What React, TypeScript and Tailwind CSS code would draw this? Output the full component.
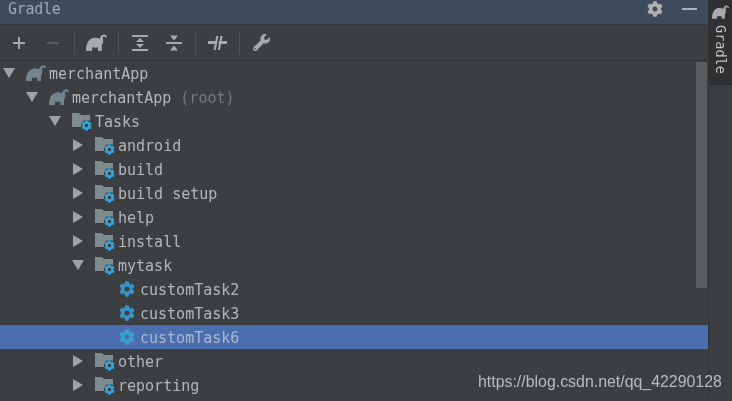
import React from "react";
import { FaCog, FaWrench } from "react-icons/fa";

interface TreeRow {
  label: string;
  depth: number;
  kind: "elephant" | "folder" | "task";
  arrow?: "open" | "closed";
  suffix?: string;
  selected?: boolean;
}

const rows: TreeRow[] = [
  { label: "merchantApp", depth: 0, kind: "elephant", arrow: "open" },
  { label: "merchantApp", depth: 1, kind: "elephant", arrow: "open", suffix: "(root)" },
  { label: "Tasks", depth: 2, kind: "folder", arrow: "open" },
  { label: "android", depth: 3, kind: "folder", arrow: "closed" },
  { label: "build", depth: 3, kind: "folder", arrow: "closed" },
  { label: "build setup", depth: 3, kind: "folder", arrow: "closed" },
  { label: "help", depth: 3, kind: "folder", arrow: "closed" },
  { label: "install", depth: 3, kind: "folder", arrow: "closed" },
  { label: "mytask", depth: 3, kind: "folder", arrow: "open" },
  { label: "customTask2", depth: 4, kind: "task" },
  { label: "customTask3", depth: 4, kind: "task" },
  { label: "customTask6", depth: 4, kind: "task", selected: true },
  { label: "other", depth: 3, kind: "folder", arrow: "closed" },
  { label: "reporting", depth: 3, kind: "folder", arrow: "closed" },
];

const indent = ["pl-[3px]", "pl-[26px]", "pl-[49px]", "pl-[72px]", "pl-[95px]"];

function Elephant({ className }: { className: string }) {
  return (
    <svg viewBox="0 0 20 16" className={className} fill="currentColor">
      <path d="M0 16 C0 9 2.5 4 8 3.4 C10 3.2 11.5 3.8 13.2 4.2 C13.6 2 15.2 0.3 17.2 0.3 C18.8 0.3 20 1.5 20 3 L18.4 3.4 C18.3 2.5 17.8 2.1 17.1 2.2 C16.2 2.4 15.9 3.4 16.2 5 C16.6 7.4 16 9.6 15 10.6 L15 16 L11.6 16 L11 12.6 C9 13.2 7.6 13 6.2 12.6 L5.6 16 Z" />
    </svg>
  );
}

function FolderGear() {
  return (
    <span className="relative block w-[20px] h-[18px]">
      <svg viewBox="0 0 18 14" className="absolute left-0 top-0 w-[18px] h-[14px] text-[#7f8b91]" fill="currentColor">
        <path d="M0 0 H7 L9 2 H18 V14 H0 Z" />
      </svg>
      <FaCog className="absolute right-0 bottom-0 w-[11px] h-[11px] text-[#35a3d4] bg-[#3c3f41] rounded-full" />
    </span>
  );
}

function Arrow({ dir }: { dir: "open" | "closed" }) {
  return (
    <svg viewBox="0 0 12 12" className="w-[12px] h-[12px] text-[#a0a3a5]" fill="currentColor">
      {dir === "open" ? <path d="M0 1 H12 L6 11 Z" /> : <path d="M1 0 L11 6 L1 12 Z" />}
    </svg>
  );
}

function ToolDivider() {
  return <div className="w-px h-[22px] bg-[#505355] mx-[11px]" />;
}

function Toolbar() {
  return (
    <div className="h-[36px] flex items-center pl-[12px] border-b border-[#303233] text-[#a7aaac]">
      <svg viewBox="0 0 14 14" className="w-[14px] h-[14px]" fill="currentColor">
        <path d="M6 1 H8 V6 H13 V8 H8 V13 H6 V8 H1 V6 H6 Z" />
      </svg>
      <svg viewBox="0 0 14 14" className="w-[14px] h-[14px] ml-[20px] mr-[3px] text-[#5a5d5f]" fill="currentColor">
        <path d="M1 6 H13 V8 H1 Z" />
      </svg>
      <ToolDivider />
      <Elephant className="w-[21px] h-[17px]" />
      <ToolDivider />
      <svg viewBox="0 0 16 16" className="w-[16px] h-[16px] ml-[2px]" fill="currentColor">
        <path d="M0 0 H16 V2 H0 Z M0 14 H16 V16 H0 Z M8 3 L12 7 H4 Z M4 9 H12 L8 13 Z" />
      </svg>
      <svg viewBox="0 0 16 16" className="w-[16px] h-[16px] ml-[18px] mr-[2px]" fill="currentColor">
        <path d="M0 7 H16 V9 H0 Z M4 0.5 H12 L8 5.5 Z M8 10.5 L12 15.5 H4 Z" />
      </svg>
      <ToolDivider />
      <svg viewBox="0 0 19 16" className="w-[19px] h-[16px] ml-[1px] mr-[1px]" fill="currentColor">
        <path d="M0 6 H7.4 L6.8 9 H0 Z M11 6 H19 V9 H10.4 Z M8.2 1 H10.4 L7.8 15 H5.6 Z M12.4 1 H14.6 L12 15 H9.8 Z" />
      </svg>
      <ToolDivider />
      <FaWrench className="w-[17px] h-[17px] ml-[2px]" />
    </div>
  );
}

function Row({ row }: { row: TreeRow }) {
  return (
    <div className={`h-[24px] flex items-center ${indent[row.depth]} ${row.selected ? "bg-[#4b6eaf] text-[#a9b9cf]" : "text-[#b4b6b7]"}`}>
      {row.arrow ? (
        <span className="w-[23px] shrink-0">
          <Arrow dir={row.arrow} />
        </span>
      ) : (
        <span className="w-[23px] shrink-0" />
      )}
      {row.kind === "elephant" && (
        <span className="w-[23px] shrink-0">
          <Elephant className="w-[20px] h-[16px] text-[#73858f]" />
        </span>
      )}
      {row.kind === "folder" && (
        <span className="w-[23px] shrink-0 pt-[2px]">
          <FolderGear />
        </span>
      )}
      {row.kind === "task" && (
        <span className="w-[22px] shrink-0 pl-[1px]">
          <FaCog className={`w-[16px] h-[16px] ${row.selected ? "text-[#3a9fd1]" : "text-[#3592c4]"}`} />
        </span>
      )}
      <span className="whitespace-pre pt-[2px]">{row.label}</span>
      {row.suffix && <span className="ml-[9px] pt-[2px] text-[#777a7c]">{row.suffix}</span>}
    </div>
  );
}

export default function App() {
  return (
    <div className="relative w-[732px] h-[401px] overflow-hidden flex bg-[#3c3f41] font-['DejaVu_Sans_Mono',monospace] text-[15px] leading-none blur-[0.4px]">
      <div className="w-[708px] shrink-0 flex flex-col">
        <div className="h-[25px] flex items-center bg-[#3d4b5c] border-b border-[#323435] pl-[8px] pr-[11px] pb-[6px] text-[#a3a8ad]">
          <span className="tracking-[-0.3px] pt-[1px]">Gradle</span>
          <FaCog className="ml-auto mr-[1px] w-[16px] h-[16px] text-[#afb1b3]" />
          <div className="ml-[18px] w-[15px] h-[2px] bg-[#afb1b3]" />
        </div>
        <Toolbar />
        <div className="relative flex-1">
          {rows.map((row, i) => (
            <Row key={i} row={row} />
          ))}
          <div className="absolute right-[1px] top-[1px] w-[11px] h-[226px] bg-[#5a5c5e]" />
        </div>
      </div>
      <div className="flex-1 border-l border-[#323435]">
        <div className="h-[85px] bg-[#2e3031] flex flex-col items-center pt-[5px] text-[#c4c6c7]">
          <Elephant className="w-[17px] h-[14px] text-[#a9abad]" />
          <span className="mt-[6px] text-[13.5px] [writing-mode:vertical-rl]">Gradle</span>
        </div>
      </div>
      <span className="absolute left-[478px] top-[373px] font-['Liberation_Sans',sans-serif] text-[15.9px] leading-[18px] text-[#b9babb]">
        https://blog.csdn.net/qq_42290128
      </span>
    </div>
  );
}
